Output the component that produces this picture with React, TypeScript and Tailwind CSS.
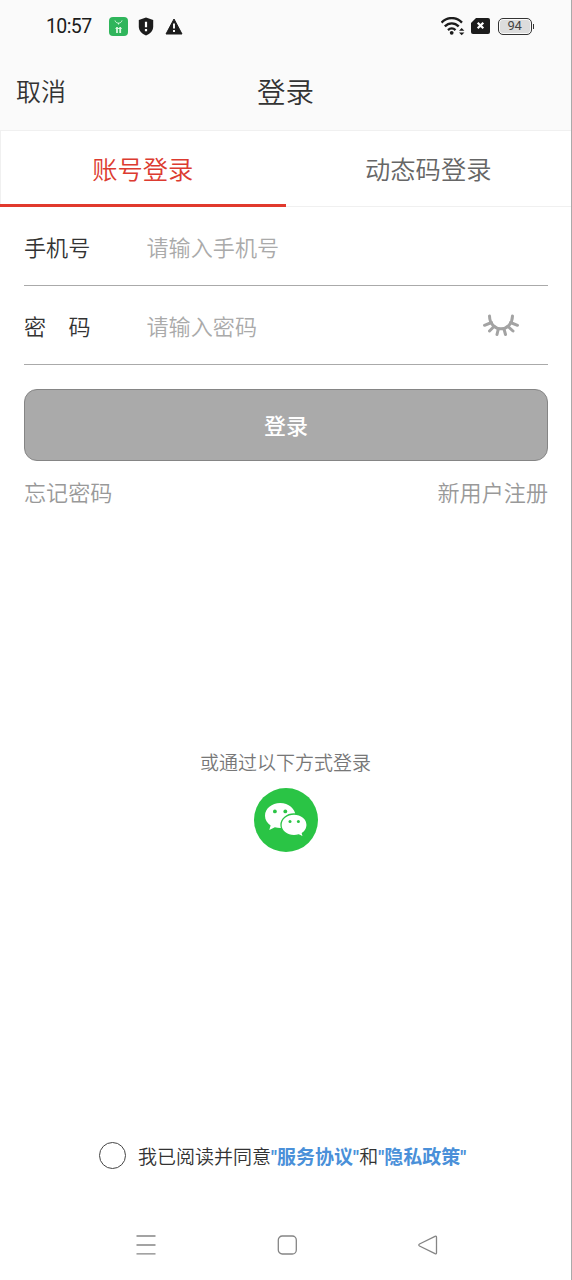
import { useState } from "react";

const tabs = ["账号登录", "动态码登录"];

function StatusBar() {
  return (
    <div className="flex h-[50px] items-center pl-[46px] pr-[37px] pt-[2px] text-[#1c1c1c]">
      <span className="w-[63px] pt-px font-['Roboto'] text-[19.5px] font-normal tracking-[-0.6px]">10:57</span>

      <svg className="h-[19px] w-[19px]" viewBox="0 0 19 19" fill="none">
        <rect width="19" height="19" rx="4" fill="#2fb55b" />
        <path d="M6 3.5C7 7 12 7 13 3.5M9.5 6v1.5" stroke="#d9f8e0" strokeWidth="1" />
        <path d="M8 10v6M11.2 10v6" stroke="#d9f8e0" strokeWidth="1.8" />
        <path d="M6.5 11.500h6.200" stroke="#d9f8e0" strokeWidth="1" />
      </svg>
      <svg className="ml-[10px] h-[19px] w-4" viewBox="0 0 16 19">
        <path d="M8 .5 15.2 3v6.5c0 4.3-3 7.3-7.2 9-4.200-1.700-7.200-4.700-7.200-9V3Z" fill="#1c1c1c" />
        <path d="M8 4.800v5.400M8 12v2.200" stroke="#fff" strokeWidth="2.200" />
      </svg>
      <svg className="ml-[11px] h-[17px] w-[18px]" viewBox="0 0 18 17">
        <path d="M9 1 17 16H1Z" fill="#1c1c1c" stroke="#1c1c1c" strokeWidth="1" strokeLinejoin="round" />
        <path d="M9 5.500v5M9 12v2" stroke="#fff" strokeWidth="1.900" />
      </svg>

      <svg className="ml-auto h-[19px] w-6" viewBox="0 0 24 19" fill="none">
        <g stroke="#1c1c1c" strokeWidth="2.300">
          <path d="M.5 5.600C6.300-.5 15.200-.5 21 5.600" />
          <path d="M3.800 9.400c4-4.100 9.900-4.100 13.900 0" />
          <path d="M7 13.100c2.200-2.200 5.300-2.200 7.500 0" />
        </g>
        <circle cx="10.700" cy="15.800" r="1.900" fill="#1c1c1c" />
        <path d="m18 13.800 2.700-2.700 2.700 2.700ZM18 15.600l2.700 2.700 2.700-2.700Z" fill="#1c1c1c" />
      </svg>
      <svg className="ml-[6px] h-4 w-[19px]" viewBox="0 0 19 16">
        <path d="M5 0h12a2 2 0 0 1 2 2v12a2 2 0 0 1-2 2H2a2 2 0 0 1-2-2V5Z" fill="#1c1c1c" />
        <path d="m6.700 4.700 5.600 5.600M12.300 4.700l-5.600 5.600" stroke="#fff" strokeWidth="2.200" />
      </svg>
      <div className="ml-2 flex h-[17px] w-[34px] items-center justify-center rounded-[5px] border-[1.5px] border-[#333] bg-[#dcdcdc] font-['Roboto'] text-[13px] font-normal tracking-[-0.4px] text-[#444] shadow-[inset_0_0_0_1px_#fafafa]">
        94
      </div>
      <span className="ml-px h-[5px] w-[1.500px] bg-[#333]" />
    </div>
  );
}

function ClosedEye() {
  return (
    <svg className="h-[23px] w-[38px]" viewBox="0 0 38 23" fill="none" stroke="#a3a3a3" strokeWidth="3" strokeLinecap="round">
      <path d="M7.500 2C8 19 30 19 30.500 2" />
      <path d="m9.500 8.500-7 2.800M12 12.500l-4.500 4.500M16.300 15l-1.300 5.500M28.500 8.500l7 2.800M26 12.500l5 4.500M22 15l1.500 5.500" />
    </svg>
  );
}

function WechatIcon() {
  return (
    <svg className="h-16 w-16" viewBox="0 0 64 64">
      <circle cx="32" cy="32" r="32" fill="#2ac445" />
      <path
        d="M26.200 15.100c-8.400 0-15.200 5.600-15.200 12.600 0 4 2.200 7.400 5.600 9.700l-1.300 4.700 5.600-2.800c1.700.5 3.500.7 5.300.7 8.400 0 15.200-5.500 15.200-12.300s-6.800-12.600-15.200-12.600Z"
        fill="#fff"
      />
      <path
        d="M40 26c7.300 0 13.100 4.800 13.100 10.900 0 3.500-1.900 6.500-4.700 8.500l1.100 3.900-4.700-2.400c-1.500.4-3.100.7-4.800.7-7.300 0-13-4.800-13-10.700S32.700 26 40 26Z"
        fill="#fff"
        stroke="#2ac445"
        strokeWidth="1.300"
      />
      <g fill="#2ac445">
        <circle cx="20.900" cy="23.400" r="1.900" />
        <circle cx="31.300" cy="23.400" r="1.900" />
        <circle cx="36" cy="33.600" r="1.500" />
        <circle cx="44.400" cy="33.600" r="1.500" />
      </g>
    </svg>
  );
}

function NavBar() {
  return (
    <div className="flex h-[70px] items-center pl-[136px] pr-[133px]">
      <svg className="h-5 w-5" viewBox="0 0 20 20" stroke="#858585" strokeWidth="1.300">
        <path d="M.5 1h19M.5 10h19M.5 18.800h19" />
      </svg>
      <svg className="ml-[121px] h-5 w-5" viewBox="0 0 20 20" fill="none" stroke="#858585" strokeWidth="1.300">
        <rect x="1.300" y="1" width="18" height="18" rx="4" />
      </svg>
      <svg className="ml-auto h-5 w-5" viewBox="0 0 20 20" fill="none" stroke="#858585" strokeWidth="1.300">
        <path d="M1.500 9 17 1.300q1.500-.6 1.500 1v15.400q0 1.600-1.500 1L1.500 11q-1.400-1 0-2Z" />
      </svg>
    </div>
  );
}

export default function App() {
  const [active, setActive] = useState(0);
  const [agreed, setAgreed] = useState(false);

  return (
    <div className="flex h-[1280px] w-[572px] flex-col border-r border-[#aaa] bg-white font-['Noto_Sans_CJK_SC',sans-serif] font-[350] text-[#333]">
      <div className="bg-[#fafafa]">
        <StatusBar />
        <header className="grid h-20 grid-cols-3 items-center pl-4 pt-[2px]">
          <button className="text-left text-[25px]">取消</button>
          <h1 className="-ml-4 text-center text-[28.500px]">登录</h1>
        </header>
      </div>

      {/* Tabs */}
      <div className="flex h-[77px] border-y border-l border-[#f0f0f0]">
        {tabs.map((tab, i) => (
          <button
            key={tab}
            onClick={() => setActive(i)}
            className={
              i === active
                ? "-mb-px -ml-px flex-1 border-b-[3px] border-[#e1392d] pt-[2px] text-[25.300px] text-[#dc3b30]"
                : "flex-1 text-[25.300px] text-[#666]"
            }
          >
            {tab}
          </button>
        ))}
      </div>

      {/* Form */}
      <div className="pl-6 pr-[23px]">
        <label className="flex h-[79px] items-center border-b-[1.500px] border-[#aaa] pt-px text-[22.100px]">
          <span className="w-[122.500px]">手机号</span>
          <span className="flex-1 text-[#aaa]">请输入手机号</span>
        </label>
        <label className="flex h-[79px] items-center border-b border-[#aaa] pt-px text-[22.100px]">
          <span className="mr-14 flex w-[66.500px] justify-between">
            <span>密</span>
            <span>码</span>
          </span>
          <span className="flex-1 text-[#aaa]">请输入密码</span>
          <span className="mr-7">
            <ClosedEye />
          </span>
        </label>

        <button className="mt-6 h-[72px] w-full rounded-[13px] border border-[#858585] bg-[#aaa] pb-[2px] text-[22px] font-medium text-white">
          登录
        </button>
        <div className="mt-[14px] flex justify-between text-[22.100px] leading-8 text-[#999]">
          <button>忘记密码</button>
          <button>新用户注册</button>
        </div>
      </div>

      {/* Other ways to log in */}
      <div className="mt-[241px] flex flex-col items-center">
        <p className="text-[19px] leading-7 text-[#777]">或通过以下方式登录</p>
        <button className="mt-3">
          <WechatIcon />
        </button>
      </div>

      {/* Agreement */}
      <div className="mt-auto flex h-9 items-center pl-[99px] text-[19px]">
        <button
          onClick={() => setAgreed(!agreed)}
          className={
            agreed
              ? "mb-px h-[27px] w-[27px] rounded-full border-[1.500px] border-[#444] bg-[#4a90d9]"
              : "mb-px h-[27px] w-[27px] rounded-full border-[1.500px] border-[#444]"
          }
        />
        <p className="ml-3 whitespace-nowrap pt-1 font-['Roboto','Noto_Sans_CJK_SC',sans-serif]">
          我已阅读并同意
          <span className="font-bold text-[#4a90d9]">"服务协议"</span>和
          <span className="font-bold text-[#4a90d9]">"隐私政策"</span>
        </p>
      </div>
      <div className="mt-9">
        <NavBar />
      </div>
    </div>
  );
}
